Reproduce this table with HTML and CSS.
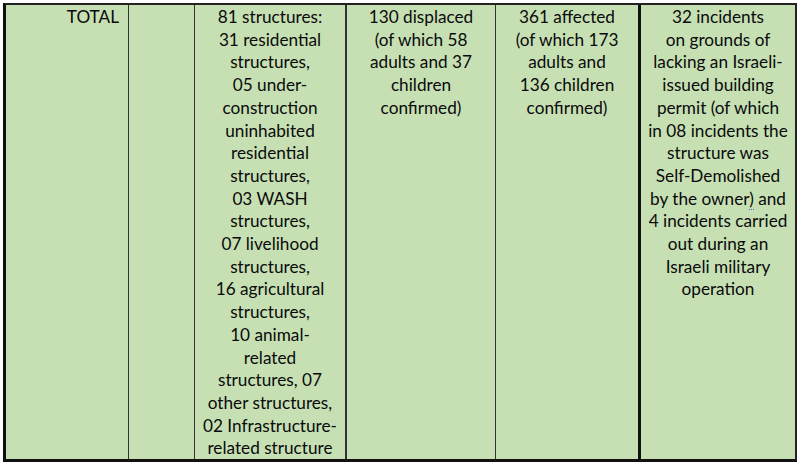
FILE: index.html
```html
<!DOCTYPE html>
<html>
<head>
<meta charset="utf-8">
<link rel="stylesheet" href="styles.css">
</head>
<body>
<div class="sheet">
  <div class="cell c1">TOTAL</div>
  <div class="cell c2"></div>
  <div class="cell c3">81 structures:<br>31 residential<br>structures,<br>05 under-<br>construction<br>uninhabited<br>residential<br>structures,<br>03 WASH<br>structures,<br>07 livelihood<br>structures,<br>16 agricultural<br>structures,<br>10 animal-<br>related<br>structures, 07<br>other structures,<br>02 Infrastructure-<br>related structure</div>
  <div class="cell c4">130 displaced<br>(of which 58<br>adults and 37<br>children<br>confirmed)</div>
  <div class="cell c5">361 affected<br>(of which 173<br>adults and<br>136 children<br>confirmed)</div>
  <div class="cell c6">32 incidents<br>on grounds of<br>lacking an Israeli-<br>issued building<br>permit (of which<br>in 08 incidents the<br>structure was<br>Self-Demolished<br>by the owner<span class="mark">)</span> and<br>4 incidents carried<br>out during an<br>Israeli military<br>operation</div>
</div>
</body>
</html>
```
FILE: styles.css
```css
html, body {
  margin: 0;
  padding: 0;
  background: #ffffff;
}
.sheet {
  margin: 3px 0 0 3px;
  width: 789px;
  height: 454px;
  background: #c6e0b4;
  border-left: 3px solid #111;
  border-top: 2px solid #222;
  border-right: 2px solid #222;
  border-bottom: 3px solid #111;
  display: grid;
  grid-template-columns: 123px 66px 152px 149px 145px 154px;
  font-family: Lato, "Open Sans", sans-serif;
  font-size: 17.2px;
  line-height: 22.7px;
  color: #0a0a0a;
}
.cell {
  white-space: nowrap;
  text-align: center;
  padding-top: 1px;
  min-height: 0;
}
.c1 {
  text-align: right;
  padding-right: 9px;
  border-right: 1px solid #333;
}
.c2 { border-right: 1px solid #333; }
.c3 { border-right: 2px solid #333; }
.c4 { border-right: 1px solid #333; }
.c5 { border-right: 3px solid #111; }
.mark {
  border-bottom: 1px dotted #2a6fd6;
}
```
